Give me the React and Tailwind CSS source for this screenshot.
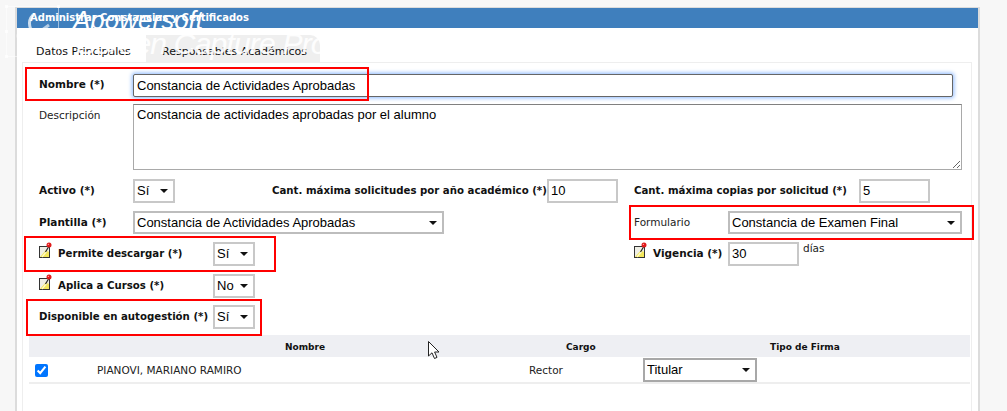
import React from "react";

const V = "font-['DejaVu_Sans',Verdana,sans-serif]";
const A = "font-['Liberation_Sans',Arial,sans-serif]";

function Note() {
  return (
    <svg width="13" height="16" viewBox="0 0 13 16" className="block shrink-0 -translate-y-[4px]">
      <rect x="0.5" y="4.5" width="10" height="11" fill="#efefe6" stroke="#333" />
      <path d="M1 15 H10 V10 L7 8 Z" fill="#f3e75c" />
      <path d="M3 15 L8 9" stroke="#fffbd0" strokeWidth="1.2" />
      <path d="M6.5 10 L9.5 5" stroke="#222" strokeWidth="1.2" />
      <circle cx="10" cy="3" r="2.5" fill="#e01b1b" />
      <circle cx="9.4" cy="2.4" r="0.7" fill="#ff9a9a" />
    </svg>
  );
}

function Sel({ value, w, h = "h-[24px]", border = "border-[#c8c8c8]" }) {
  return (
    <div className={`relative shrink-0 ${w} ${h}`}>
      <select
        defaultValue={value}
        className={`${A} block appearance-none w-full h-full border-2 ${border} bg-white pl-[2px] text-[13px] text-black rounded-none outline-none`}
      >
        <option>{value}</option>
      </select>
      <svg width="8" height="4" viewBox="0 0 8 4" className="absolute right-[7px] top-1/2 -translate-y-1/2 pointer-events-none">
        <path d="M0 0 H8 L4 4 Z" fill="#111" />
      </svg>
    </div>
  );
}

function Num({ value, w, h = "h-[24px]" }) {
  return (
    <input
      defaultValue={value}
      className={`${A} ${w} ${h} shrink-0 border-2 border-[#c8c8c8] bg-white pl-[2px] pb-[1px] text-[13px] text-black outline-none`}
    />
  );
}

function Label({ children, className = "", long = false }) {
  return (
    <span className={`${V} ${long ? "text-[10.2px]" : "text-[10.5px]"} font-bold text-[#111] whitespace-nowrap ${className}`}>
      {children}
    </span>
  );
}

function Plain({ children, className = "" }) {
  return <span className={`${V} text-[10.5px] text-[#222] whitespace-nowrap ${className}`}>{children}</span>;
}

function RedBox({ className }) {
  return <div className={`absolute border-[2px] border-[#f00] pointer-events-none ${className}`} />;
}

export default function App() {
  return (
    <div className="relative w-[1007px] h-[411px] overflow-hidden bg-[#f7f7f7] pt-[7px] pl-[15px]">
      <div className="w-[965px] h-[404px] border-l-2 border-r-2 border-t border-[#dcdcdc] bg-white">
        <div className={`${V} h-[20px] bg-[#3f7fbd] pl-[13px] text-[10px] font-bold leading-[20px] text-white`}>
          Administrar Constancias y Certificados
        </div>

        <div className="px-[5px] pt-[7px]">
          <div className="flex h-[27px] items-stretch">
            <div className="w-[124px] pl-[14px] pt-[2px] bg-white">
              <span className={`${V} text-[11px] text-[#111] whitespace-nowrap`}>Datos Principales</span>
            </div>
            <div className="w-[174px] pl-[16px] pt-[2px] bg-[#efefef] rounded-tr-[10px]">
              <span className={`${V} text-[11px] text-[#111] whitespace-nowrap`}>Responsables Académicos</span>
            </div>
          </div>

          <div className="h-[350px] w-[950px] border-l border-r border-t border-[#eeeeee] pt-[10px]">
            {/* Nombre */}
            <div className="flex h-[24px] items-center pl-[16px]">
              <Label className="w-[94px]">Nombre (*)</Label>
              <input
                defaultValue="Constancia de Actividades Aprobadas"
                className={`${A} h-[23px] w-[820px] rounded-[2px] border border-[#666] bg-white pl-[3px] text-[13px] text-black outline-none shadow-[0_0_4px_1px_#8ab8ff]`}
              />
            </div>

            {/* Descripción */}
            <div className="mt-[7px] flex items-start pl-[16px]">
              <Plain className="w-[94px] pt-[4px]">Descripción</Plain>
              <textarea
                defaultValue="Constancia de actividades aprobadas por el alumno"
                className={`${A} block h-[66px] w-[829px] border border-[#a9a9a9] border-t-[#808080] bg-white px-[3px] py-0 text-[13px] text-black outline-none`}
              />
            </div>

            {/* Activo */}
            <div className="mt-[9px] flex h-[24px] items-center pl-[16px]">
              <Label className="w-[94px]">Activo (*)</Label>
              <Sel value="Sí" w="w-[42px]" />
              <Label long className="ml-[97px] w-[275px]">Cant. máxima solicitudes por año académico (*)</Label>
              <Num value="10" w="w-[71px]" />
              <Label long className="ml-[16px] w-[225px]">Cant. máxima copias por solicitud (*)</Label>
              <Num value="5" w="w-[71px]" />
            </div>

            {/* Plantilla */}
            <div className="mt-[8px] flex h-[23px] items-center pl-[16px]">
              <Label className="w-[94px]">Plantilla (*)</Label>
              <Sel value="Constancia de Actividades Aprobadas" w="w-[311px]" h="h-[23px]" border="border-[#bdbdbd]" />
              <Plain className="ml-[190px] w-[94px]">Formulario</Plain>
              <Sel value="Constancia de Examen Final" w="w-[234px]" h="h-[23px]" border="border-[#bdbdbd]" />
            </div>

            {/* Permite / Vigencia */}
            <div className="mt-[8px] flex h-[24px] items-center pl-[16px]">
              <div className="flex w-[174px] items-center gap-[6px]">
                <Note />
                <Label long>Permite descargar (*)</Label>
              </div>
              <Sel value="Sí" w="w-[42px]" />
              <div className="ml-[379px] flex w-[94px] items-center gap-[6px]">
                <Note />
                <Label>Vigencia (*)</Label>
              </div>
              <Num value="30" w="w-[71px]" />
              <Plain className="ml-[4px] -translate-y-[5px]">días</Plain>
            </div>

            {/* Aplica */}
            <div className="mt-[8px] flex h-[24px] items-center pl-[16px]">
              <div className="flex w-[174px] items-center gap-[6px]">
                <Note />
                <Label long>Aplica a Cursos (*)</Label>
              </div>
              <Sel value="No" w="w-[42px]" />
            </div>

            {/* Disponible */}
            <div className="mt-[7px] flex h-[24px] items-center pl-[16px]">
              <Label long className="w-[174px]">Disponible en autogestión (*)</Label>
              <Sel value="Sí" w="w-[42px]" />
            </div>

            {/* Tabla */}
            <div className="ml-[6px] mt-[6px] w-[941px]">
              <div className={`${V} flex h-[22px] items-center bg-[#eeeff3] pt-[3px] text-[9px] font-bold text-[#111]`}>
                <div className="w-[537px] pl-[256px]">Nombre</div>
                <div className="w-[204px]">Cargo</div>
                <div>Tipo de Firma</div>
              </div>
              <div className="flex h-[27px] items-center border-b-2 border-[#eeeeee] pt-[1px]">
                <input type="checkbox" defaultChecked className="ml-[6px] h-[13px] w-[13px] accent-[#0075ff]" />
                <Plain className="ml-[49px] w-[432px] pt-[2px]">PIANOVI, MARIANO RAMIRO</Plain>
                <Plain className="w-[114px] pt-[2px]">Rector</Plain>
                <Sel value="Titular" w="w-[114px]" h="h-[24px]" border="border-[#a8a8a8]" />
              </div>
            </div>
          </div>
        </div>
      </div>

      {/* Anotaciones sobre la captura */}
      <RedBox className="left-[25px] top-[67px] w-[344px] h-[34px]" />
      <RedBox className="left-[24px] top-[236px] w-[252px] h-[36px]" />
      <RedBox className="left-[26px] top-[299px] w-[236px] h-[37px]" />
      <RedBox className="left-[629px] top-[205px] w-[345px] h-[35px]" />

      {/* Cursor */}
      <svg width="14" height="20" viewBox="0 0 14 20" className="absolute left-[428px] top-[341px]">
        <path d="M0.5 0.5 V15 L4 11.8 L6.5 17.5 L9 16.4 L6.6 11 H11 Z" fill="#fff" stroke="#222" strokeWidth="1" />
      </svg>

      {/* Marca de agua */}
      <div className="absolute left-[6px] top-[6px] h-[51px] w-[53px] border border-white/50 pointer-events-none">
        <span className="absolute -left-[2px] -top-[2px] h-[3px] w-[3px] bg-white/70" />
        <span className="absolute -right-[2px] -top-[2px] h-[3px] w-[3px] bg-white/70" />
        <span className="absolute -left-[2px] top-[23px] h-[3px] w-[3px] bg-white/70" />
        <span className="absolute -left-[2px] -bottom-[2px] h-[3px] w-[3px] bg-white/70" />
      </div>
      <svg width="42" height="42" viewBox="0 0 42 42" className="absolute left-[13px] top-[13px] pointer-events-none">
        <path d="M20 2 C14 8 16 18 24 24 L38 30" fill="none" stroke="#fff" strokeOpacity="0.75" strokeWidth="3" />
        <path d="M36 12 L14 28" fill="none" stroke="#fff" strokeOpacity="0.6" strokeWidth="3" />
        <circle cx="9" cy="23" r="4" fill="none" stroke="#fff" strokeOpacity="0.6" strokeWidth="3" />
        <circle cx="11" cy="33" r="4" fill="none" stroke="#fff" strokeOpacity="0.6" strokeWidth="3" />
      </svg>
      <div className={`${A} absolute left-[73px] top-[5px] text-[26px] italic leading-[30px] text-white pointer-events-none`}>Apowersoft</div>
      <div className={`${A} absolute left-[76px] top-[28px] text-[30px] italic leading-[32px] tracking-[-0.8px] text-white/90 pointer-events-none whitespace-nowrap`}>Screen Capture Pro</div>
    </div>
  );
}
